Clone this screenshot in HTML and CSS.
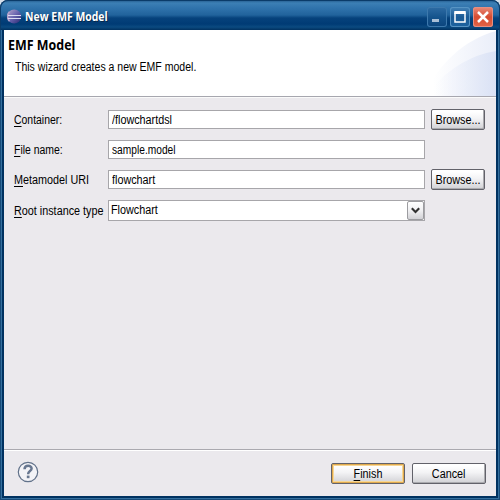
FILE: index.html
```
<!DOCTYPE html>
<html lang="en">
<head>
<meta charset="utf-8">
<title>New EMF Model</title>
<link rel="stylesheet" href="styles.css">
</head>
<body>
<div class="window">
  <header class="titlebar">
    <svg class="logo" width="16" height="16" viewBox="0 0 16 16">
      <defs>
        <linearGradient id="orb" x1="0" y1="0" x2="1" y2="1"><stop offset="0" stop-color="#b9a6cc"/><stop offset=".5" stop-color="#6763ae"/><stop offset="1" stop-color="#25256f"/></linearGradient>
      </defs>
      <circle cx="7.2" cy="7.5" r="7" fill="url(#orb)"/>
      <path d="M2.5 2.8A6.6 6.6 0 0 0 2.5 12.2" fill="none" stroke="#b3a1ca" stroke-width="1.6"/>
      <path d="M1 6.5H14M1 9.5H14" stroke="#dcdcf2" stroke-width="1.1"/>
    </svg>
    <h1 class="title"><span class="t-title">New EMF Model</span></h1>
    <div class="controls">
      <span class="ctl"><svg width="20" height="20" viewBox="0 0 20 20"><path d="M5 13.5H12" stroke="#a9bfd7" stroke-width="3"/></svg></span>
      <span class="ctl ctl-max"><svg width="20" height="20" viewBox="0 0 20 20"><path d="M5 5.5V15H15V5.5" fill="none" stroke="#fff" stroke-width="1.5"/><path d="M4.3 5.5H15.7" stroke="#fff" stroke-width="3"/></svg></span>
      <span class="ctl ctl-close"><svg width="20" height="20" viewBox="0 0 20 20"><path d="M5 5L15 15M15 5L5 15" stroke="#fff" stroke-width="2.5"/></svg></span>
    </div>
  </header>
  <section class="banner">
    <svg class="swoosh" width="92" height="66" viewBox="0 0 92 66">
      <defs>
        <linearGradient id="s1"><stop offset=".12" stop-color="#fff"/><stop offset="1" stop-color="#eaeef9"/></linearGradient>
        <linearGradient id="s2"><stop offset=".15" stop-color="#e9edf9" stop-opacity="0"/><stop offset="1" stop-color="#dae2f5"/></linearGradient>
      </defs>
      <path d="M20 66C34 34 60 10 92 1V66Z" fill="url(#s1)"/>
      <path d="M20 66C42 40 66 25 92 21V66Z" fill="url(#s2)"/>
    </svg>
    <h2 class="heading"><span class="t-heading">EMF Model</span></h2>
    <p class="description"><span class="t-desc">This wizard creates a new EMF model.</span></p>
  </section>
  <main class="form">
    <div class="row">
      <span class="label"><span class="t-container"><u>C</u>ontainer:</span></span>
      <span class="field"><span class="t-path">/flowchartdsl</span></span>
      <span class="button browse"><span class="t-browse">Browse...</span></span>
    </div>
    <div class="row">
      <span class="label"><span class="t-file"><u>F</u>ile name:</span></span>
      <span class="field"><span class="t-sample">sample.model</span></span>
    </div>
    <div class="row">
      <span class="label"><span class="t-meta"><u>M</u>etamodel URI</span></span>
      <span class="field"><span class="t-flow">flowchart</span></span>
      <span class="button browse"><span class="t-browse">Browse...</span></span>
    </div>
    <div class="row row-select">
      <span class="label"><span class="t-root"><u>R</u>oot instance type</span></span>
      <span class="field select"><span class="t-flowc">Flowchart</span>
        <span class="arrow"><svg width="9" height="7" viewBox="0 0 9 7"><path d="M.8 1.2L4.5 4.9L8.2 1.2" fill="none" stroke="#303030" stroke-width="2.1"/></svg></span>
      </span>
    </div>
  </main>
  <footer class="footer">
    <svg class="help" width="22" height="22" viewBox="0 0 22 22">
      <circle cx="11" cy="11" r="9.7" fill="#f3f3f7" stroke="#62728a" stroke-width="1.2"/>
      <path d="M7.5 8.3C7.7 3.7 14.6 3.9 14.6 7.6C14.6 10.2 11.1 10 11.1 13.2" fill="none" stroke="#687790" stroke-width="2.5"/>
      <rect x="9.8" y="14.6" width="2.7" height="2.6" fill="#687790"/>
    </svg>
    <span class="button action primary"><span class="t-finish"><u>F</u>inish</span></span>
    <span class="button action"><span class="t-cancel">Cancel</span></span>
  </footer>
</div>
</body>
</html>
```
FILE: styles.css
```
* { box-sizing: border-box; }
body {
  margin: 0;
  background: #d6dfea;
  color: #000;
  font: 12px/16px "Liberation Sans", Arial, sans-serif;
}
h1, h2, p { margin: 0; white-space: nowrap; }
svg { display: block; flex: none; }
u { text-underline-offset: 2px; text-decoration-thickness: 1px; text-decoration-skip-ink: none; }

.window {
  width: 500px;
  height: 500px;
  display: flex;
  flex-direction: column;
  padding: 0 4px 4px;
  border-radius: 8px 8px 0 0;
  overflow: hidden;
  background: #003160;
  box-shadow: inset 0 0 0 1px #174a78, inset 0 0 0 2px #346f9e;
}
.titlebar {
  height: 30px;
  flex: none;
  margin: 0 -4px;
  padding: 2px 6px 0 6px;
  display: flex;
  align-items: center;
  border: 1px solid #0b3b69;
  border-bottom: 0;
  border-radius: 8px 8px 0 0;
  background: linear-gradient(#2b6598 0, #3c7fb5 2px, #3073ac 7px, #21639c 14px, #06427c 17px, #003b75 23px, #0b4a80 26px, #003160 29px);
}
.logo { margin-right: 2px; }
.title {
  flex: 1;
  color: #fff;
  font: bold 12px/16px "Open Sans", sans-serif;
  text-shadow: 1px 1px #06284d;
}
.controls { display: flex; gap: 3px; }
.ctl {
  width: 20px;
  height: 20px;
  border-radius: 3px;
  background: linear-gradient(#2e6ca4, #15548d 50%, #0b447d);
  box-shadow: inset 0 0 0 1px #3d79ad;
}
.ctl-max { background: linear-gradient(#4382b7, #1b5b95 50%, #1c629f); box-shadow: inset 0 0 0 1px #5794c4; }
.ctl-close { background: linear-gradient(#e98b7b, #d64c31 50%, #e36547); box-shadow: inset 0 0 0 1px #e58f82; }

.banner {
  position: relative;
  height: 67px;
  flex: none;
  padding: 7px 4px 0;
  background: #fff;
  border-bottom: 1px solid #a7a7af;
}
.swoosh { position: absolute; right: 0; top: 0; }
.heading { font: bold 14px/16px "Open Sans", sans-serif; }
.description { margin: 6px 0 0 7px; }

.form {
  flex: 1;
  padding: 11px 11px 0 10px;
  background: #ebe9ed;
  border-top: 1px solid #fafafa;
}
.row {
  height: 21px;
  margin-bottom: 9px;
  display: flex;
  align-items: center;
}
.row-select { margin-top: 10px; }
.label { width: 94px; flex: none; white-space: nowrap; }
.field {
  width: 317px;
  height: 19px;
  flex: none;
  padding: 0 3px;
  display: flex;
  align-items: center;
  background: #fff;
  border: 1px solid #a7a6aa;
}
.button {
  display: flex;
  justify-content: center;
  align-items: center;
  height: 21px;
  border: 1px solid #62626a;
  border-radius: 2px;
  background: linear-gradient(#fff 10%, #f3f3f5 45%, #d1d1d5);
  box-shadow: inset -1px -1px #aaaaae;
}
.browse { width: 54px; margin-left: 6px; }
.select { height: 21px; padding-right: 0; padding-left: 2px; justify-content: space-between; }
.select .t-flowc { margin-top: -1px; }
.arrow {
  width: 17px;
  height: 19px;
  display: flex;
  justify-content: center;
  align-items: center;
  border: 1px solid #9c9ca0;
  border-radius: 2px;
  background: linear-gradient(#fff, #f0f0f2 50%, #d2d2d6);
}

.footer {
  height: 47px;
  flex: none;
  display: flex;
  align-items: flex-start;
  gap: 7px;
  padding: 13px 10px 0 13px;
  background: #ebe9ed;
  border-top: 1px solid #aaa9af;
  box-shadow: inset 0 1px #fff;
}
.help { margin: -2px auto 0 0; }
.action { width: 74px; }
.primary { box-shadow: inset 0 0 0 1px #e0a94d, inset 0 0 0 2px #f7d795; }

/* Text runs are condensed to the metrics of the dialog font. */
[class^="t-"] { display: inline-block; white-space: nowrap; transform-origin: 0 50%; transform: scaleX(.9); }
.t-title { transform: scaleX(.87); }
.t-heading { transform: scaleX(.89); }
.t-desc { transform: scaleX(.877); }
.t-container, .t-file { transform: scaleX(.87); }
.t-sample { transform: scaleX(.85); }
.t-browse, .t-finish, .t-cancel { transform-origin: 50% 50%; }
```
